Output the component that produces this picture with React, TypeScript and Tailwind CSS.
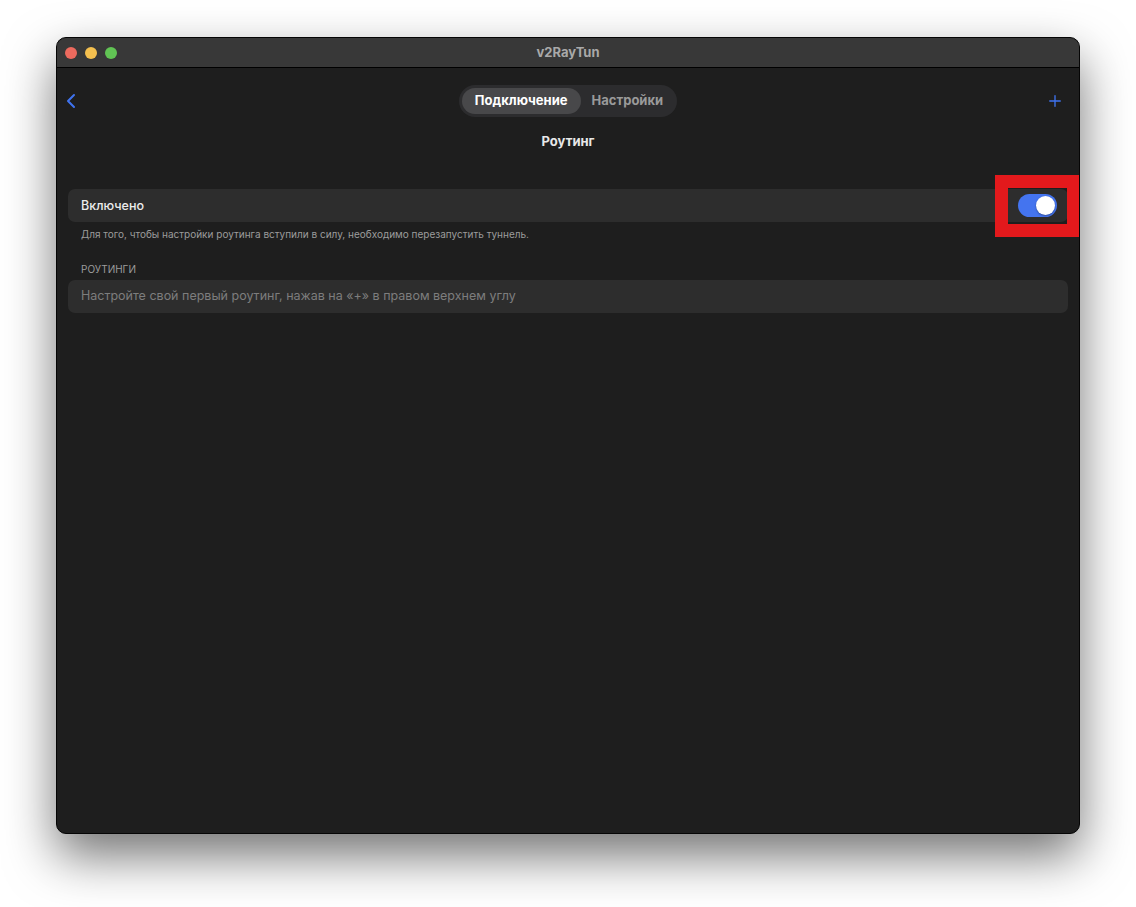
import { ChevronLeft, Plus } from "lucide-react";

/* ── macOS window: v2RayTun routing settings ── */

function TrafficLights() {
  return (
    <div className="flex items-center gap-[8px] pl-[8px]">
      <span className="h-[12px] w-[12px] rounded-full bg-[#ec6a5e]" />
      <span className="h-[12px] w-[12px] rounded-full bg-[#f4c04f]" />
      <span className="h-[12px] w-[12px] rounded-full bg-[#61c454]" />
    </div>
  );
}

function Toggle() {
  return (
    <div className="flex h-[23px] w-[39px] items-center justify-end rounded-full bg-[#4474ef] px-[2px]">
      <span className="h-[19px] w-[19px] rounded-full bg-white shadow-[0_1px_2px_rgba(0,0,0,0.35)]" />
    </div>
  );
}

export default function App() {
  return (
    <div
      className="min-h-screen bg-white pt-[37px]"
      style={{ fontFamily: '"Inter", "Noto Sans", sans-serif' }}
    >
      <div className="mx-auto flex h-[797px] w-[1024px] flex-col overflow-hidden rounded-[10px] border border-[#050505] bg-[#1e1e1e] shadow-[0_22px_50px_rgba(0,0,0,0.55)]">
        {/* Title bar */}
        <div className="relative flex h-[30px] shrink-0 items-center border-b border-black bg-[#383838]">
          <TrafficLights />
          <span className="absolute left-1/2 -translate-x-1/2 text-[13px] font-bold text-[#a9a9a9]">
            v2RayTun
          </span>
        </div>

        {/* Toolbar */}
        <div className="mt-[17px] grid h-[32px] grid-cols-[1fr_auto_1fr] items-center px-[2px]">
          <ChevronLeft className="h-[24px] w-[24px] text-[#3f73ef]" strokeWidth={2} />
          <div className="flex h-[32px] items-center rounded-full bg-[#2c2c2e] p-[3px]">
            <span className="flex h-[26px] items-center rounded-full bg-[#48484a] px-[13px] text-[13px] font-bold text-white">
              Подключение
            </span>
            <span className="flex h-[26px] items-center px-[11px] text-[13px] font-bold text-[#9a9a9a]">
              Настройки
            </span>
          </div>
          <Plus className="mr-[13px] h-[18px] w-[18px] justify-self-end text-[#3f73ef]" strokeWidth={1.8} />
        </div>

        <div className="mt-[15px] text-center text-[13px] font-bold text-[#e8e8e8]">Роутинг</div>

        {/* Enabled row */}
        <div className="mx-[11px] mt-[37px]">
          <div className="relative flex h-[33px] items-center justify-between rounded-[7px] bg-[#2d2d2d] pl-[13px] pr-[11px]">
            <span className="pt-[2px] text-[12.5px] font-medium text-[#ececec]">Включено</span>
            <Toggle />
            <div className="pointer-events-none absolute right-[-12px] top-[-14px] h-[62px] w-[85px] border-[13px] border-[#e3191c]" />
          </div>
          <p className="mt-[5px] pl-[13px] text-[10px] text-[#9c9c9c]">
            Для того, чтобы настройки роутинга вступили в силу, необходимо перезапустить туннель.
          </p>

          <p className="mt-[20px] pl-[13px] text-[10px] text-[#9c9c9c]">РОУТИНГИ</p>
          <div className="mt-[3px] flex h-[33px] items-center rounded-[7px] bg-[#2d2d2d] pl-[13px]">
            <span className="text-[12.5px] text-[#7d7d7d]">
              Настройте свой первый роутинг, нажав на «+» в правом верхнем углу
            </span>
          </div>
        </div>
      </div>
    </div>
  );
}
